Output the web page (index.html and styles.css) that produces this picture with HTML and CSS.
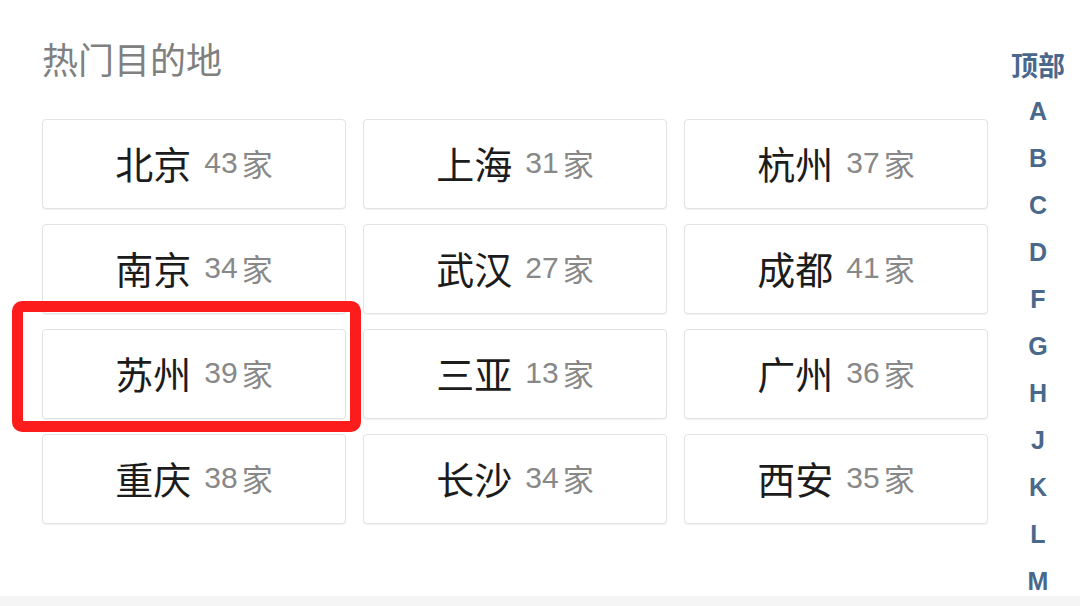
FILE: index.html
```html
<!DOCTYPE html>
<html lang="zh">
<head>
<meta charset="utf-8">
<title>热门目的地</title>
<link rel="stylesheet" href="styles.css">
</head>
<body>
<div class="page">
  <div class="content">
    <main class="main">
      <h2 class="title">热门目的地</h2>
      <div class="grid">
        <div class="card"><span class="city">北京</span><span class="count">43<i>家</i></span></div>
        <div class="card"><span class="city">上海</span><span class="count">31<i>家</i></span></div>
        <div class="card"><span class="city">杭州</span><span class="count">37<i>家</i></span></div>
        <div class="card"><span class="city">南京</span><span class="count">34<i>家</i></span></div>
        <div class="card"><span class="city">武汉</span><span class="count">27<i>家</i></span></div>
        <div class="card"><span class="city">成都</span><span class="count">41<i>家</i></span></div>
        <div class="card"><span class="city">苏州</span><span class="count">39<i>家</i></span></div>
        <div class="card"><span class="city">三亚</span><span class="count">13<i>家</i></span></div>
        <div class="card"><span class="city">广州</span><span class="count">36<i>家</i></span></div>
        <div class="card"><span class="city">重庆</span><span class="count">38<i>家</i></span></div>
        <div class="card"><span class="city">长沙</span><span class="count">34<i>家</i></span></div>
        <div class="card"><span class="city">西安</span><span class="count">35<i>家</i></span></div>
      </div>
    </main>
    <nav class="index">
      <a class="idx top">顶部</a>
      <a class="idx">A</a>
      <a class="idx">B</a>
      <a class="idx">C</a>
      <a class="idx">D</a>
      <a class="idx">F</a>
      <a class="idx">G</a>
      <a class="idx">H</a>
      <a class="idx">J</a>
      <a class="idx">K</a>
      <a class="idx">L</a>
      <a class="idx">M</a>
    </nav>
  </div>
  <div class="footer"></div>
  <div class="highlight"></div>
</div>
</body>
</html>
```

FILE: styles.css
```css
* { box-sizing: border-box; }
html, body {
  margin: 0;
  padding: 0;
  background: #ffffff;
  font-family: "Liberation Sans", "Noto Sans CJK SC", sans-serif;
}
.page {
  position: relative;
  width: 1080px;
  height: 606px;
  overflow: hidden;
  display: flex;
  flex-direction: column;
}
.content {
  flex: 1;
  display: flex;
  overflow: hidden;
}
.main {
  width: 996px;
  padding-left: 42px;
  padding-top: 38px;
}
.title {
  margin: 0;
  font-family: "Noto Sans CJK SC", sans-serif;
  font-weight: 400;
  font-size: 36px;
  line-height: 40px;
  color: #808080;
}
.grid {
  margin-top: 41px;
  display: grid;
  grid-template-columns: repeat(3, 304px);
  grid-auto-rows: 90px;
  column-gap: 17px;
  row-gap: 15px;
}
.card {
  display: flex;
  align-items: center;
  justify-content: center;
  padding-bottom: 3px;
  border: 1px solid #e3e3e3;
  border-radius: 4px;
  box-shadow: 0 1px 1px rgba(0, 0, 0, 0.06);
  background: #fff;
}
.city {
  font-family: "Noto Sans CJK SC", sans-serif;
  font-size: 38px;
  color: #1c1c1c;
  line-height: 1;
}
.count {
  margin-left: 13px;
  font-size: 30px;
  color: #888888;
  line-height: 1;
  display: flex;
  align-items: center;
}
.count i {
  font-style: normal;
  font-family: "Noto Sans CJK SC", sans-serif;
  font-size: 31px;
  margin-left: 4px;
}
.index {
  width: 84px;
  padding-top: 41px;
  display: flex;
  flex-direction: column;
  align-items: center;
}
.idx {
  height: 47px;
  display: flex;
  align-items: center;
  justify-content: center;
  font-weight: 700;
  font-size: 25px;
  color: #49688b;
  flex-shrink: 0;
}
.idx.top {
  font-family: "Noto Sans CJK SC", sans-serif;
  font-size: 27px;
}
.footer {
  height: 10px;
  background: #f5f5f5;
  flex-shrink: 0;
}
.highlight {
  position: absolute;
  left: 12px;
  top: 301px;
  width: 349px;
  height: 131px;
  border: 11px solid #fd1c1c;
  border-radius: 10px;
}
```
